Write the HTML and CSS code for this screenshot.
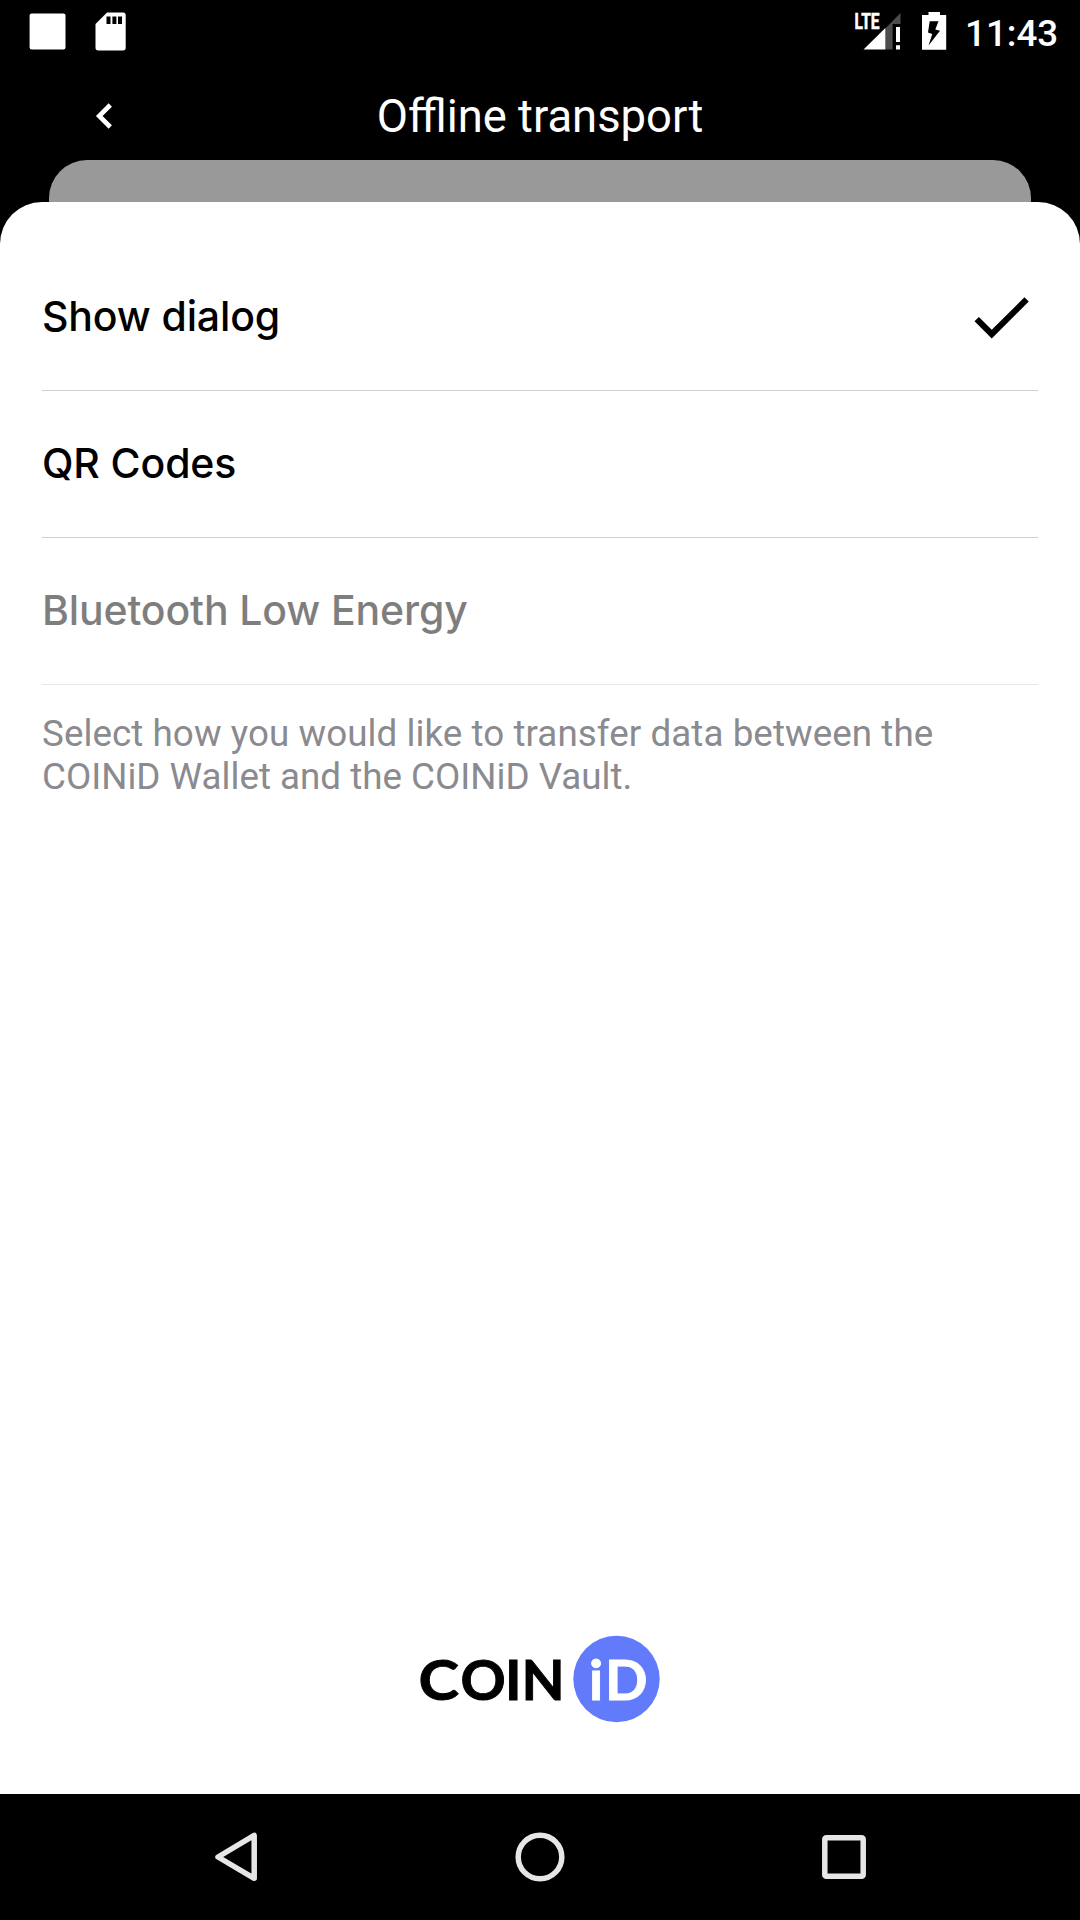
FILE: index.html
```html
<!DOCTYPE html>
<html lang="en">
<head>
<meta charset="utf-8">
<title>Offline transport</title>
<link rel="stylesheet" href="styles.css">
</head>
<body>
<div class="screen">
  <div class="status-bar">
    <svg class="status-left" viewBox="0 0 140 63" width="140" height="63">
      <rect x="29.6" y="13.6" width="35.9" height="36" rx="2" fill="#fff"/>
      <path fill="#fff" fill-rule="evenodd" d="M107 12.6H123a2.7 2.7 0 0 1 2.7 2.7V47.700a2.700 2.700 0 0 1-2.700 2.700H98.200a2.700 2.700 0 0 1-2.700-2.700V24ZM106.500 16.500v7.500h4v-7.500ZM112.400 16.500v7.500h4v-7.500ZM118 16.500v7.500h4v-7.500Z"/>
    </svg>
    <div class="status-right">
      <svg viewBox="850 0 100 63" width="100" height="63">
        <text class="lte" x="854.500" y="29" textLength="25" lengthAdjust="spacingAndGlyphs">LTE</text>
        <path fill="#4d4d4d" d="M885 28.700 900.500 13V24H892.600V49.500H885Z"/>
        <path fill="#fff" d="M863.500 49.500 885.300 28V49.500ZM896 27h4v15h-4ZM896 45.300h4v4.200h-4Z"/>
        <path fill="#fff" fill-rule="evenodd" d="M922 15h6.500v-3H940v3h6.200V49.700H922ZM929.700 21.300 928 32.500 932.300 34 928.500 45.500 940 30.700 935.300 29.500 938.500 21.300Z"/>
      </svg>
      <span class="clock">11:43</span>
    </div>
  </div>
  <header class="header">
    <svg class="back" viewBox="0 0 20 30" width="20" height="30"><path d="M16.300 4 5.200 15 16.300 26" fill="none" stroke="#fff" stroke-width="4.600"/></svg>
    <h1 class="title">Offline transport</h1>
  </header>
  <div class="card-behind"></div>
  <main class="sheet">
    <ul class="options">
      <li class="option"><span>Show dialog</span>
        <svg class="check" viewBox="0 0 24 24" width="74" height="74"><path d="M9 16.170 4.830 12l-1.420 1.410L9 19 21 7l-1.410-1.410z"/></svg>
      </li>
      <li class="option"><span>QR Codes</span></li>
      <li class="option option-disabled"><span>Bluetooth Low Energy</span></li>
    </ul>
    <p class="hint"><span class="hint-lead">Select how you would like to transfer data between the</span><br>COINiD Wallet and the COINiD Vault.</p>
    <svg class="logo" viewBox="410 1635 250 88" width="250" height="88">
      <g class="logo-text">
        <text x="418.500" y="1699.500" textLength="40.500" lengthAdjust="spacingAndGlyphs">C</text><text x="460.500" y="1699.500">O</text><text x="505" y="1699.500">I</text><text x="521.500" y="1699.500">N</text>
      </g>
      <circle cx="616.500" cy="1679" r="43.200" fill="#617bfb"/>
      <g class="logo-text logo-text-light">
        <text x="589" y="1699.500">i</text><text x="605" y="1699.500">D</text>
      </g>
    </svg>
  </main>
  <nav class="nav-bar">
    <svg viewBox="210 1827 60 60" width="60" height="60"><path d="M254.200 1835.300V1878.300L218 1857Z"/></svg>
    <svg viewBox="510 1827 60 60" width="60" height="60"><circle cx="540" cy="1857" r="21.800"/></svg>
    <svg viewBox="810 1827 60 60" width="60" height="60"><rect x="824.800" y="1837.800" width="38.400" height="38.400" rx="1.500"/></svg>
  </nav>
</div>
</body>
</html>
```
FILE: styles.css
```css
* { box-sizing: border-box; }
body { margin: 0; background: #000; }
svg { display: block; flex: none; }

.screen {
  width: 1080px;
  height: 1920px;
  display: flex;
  flex-direction: column;
  background: #000;
  font-family: Roboto, sans-serif;
  overflow: hidden;
}

.status-bar {
  height: 63px;
  display: flex;
  justify-content: space-between;
}
.status-right {
  display: flex;
  width: 230px;
}
.lte {
  font: 700 21.5px Roboto, sans-serif;
  fill: #fff;
  stroke: #fff;
  stroke-width: .6px;
}
.clock {
  margin-left: 15px;
  color: #fff;
  font-size: 36.75px;
  font-weight: 500;
  line-height: 67px;
}

.header {
  height: 97px;
  display: grid;
  grid-template-columns: 128px 1fr 128px;
  align-items: center;
}
.back { margin: 9px 0 0 94px; }
.title {
  margin: 10px 0 0;
  color: #fff;
  font-size: 45.4px;
  font-weight: 400;
  line-height: 54px;
  text-align: center;
  white-space: nowrap;
}

.card-behind {
  height: 42px;
  margin: 0 49px;
  border-radius: 38px 38px 0 0;
  background: #999;
}

.sheet {
  height: 1592px;
  padding: 42px 42px 0;
  display: flex;
  flex-direction: column;
  border-radius: 42px 42px 0 0;
  background: #fff;
}
.options {
  margin: 0;
  padding: 0;
  list-style: none;
}
.option {
  height: 147px;
  display: flex;
  align-items: center;
  justify-content: space-between;
  border-bottom: 1px solid #d2d2d2;
  color: #000;
  font-family: Inter, sans-serif;
  font-size: 41px;
  font-weight: 500;
  letter-spacing: -.14px;
}
.option span { padding-bottom: 2px; }
.option-disabled { opacity: .5; }
.hint {
  margin: 27px 0 0;
  color: #8a8a8f;
  font-size: 36.75px;
  line-height: 43px;
}
.hint-lead { letter-spacing: .065px; }
.logo {
  margin: auto auto 71px 368px;
}
.logo-text {
  font: 700 56px Lato, sans-serif;
  fill: #000;
  stroke: #000;
  stroke-width: .9px;
}
.logo-text-light { fill: #fff; stroke: #fff; }

.nav-bar {
  height: 126px;
  padding: 0 210px;
  display: flex;
  align-items: center;
  justify-content: space-between;
}
.nav-bar svg {
  fill: none;
  stroke: #e6e6e6;
  stroke-width: 5.5px;
  stroke-linejoin: round;
}
```
